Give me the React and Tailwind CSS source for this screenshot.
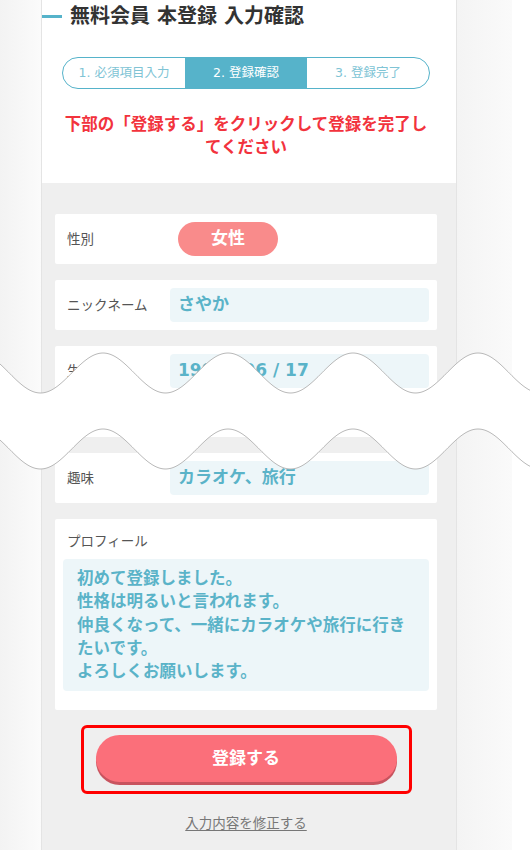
import React from 'react';

const font = { fontFamily: '"DejaVu Sans", "Noto Sans CJK JP", sans-serif' };

const Wave = () => {
  // wave outline of the "cut" in the screenshot, computed from a cosine
  const pts = [];
  for (let x = -4; x <= 534; x += 2) {
    const d = 20 * Math.cos((2 * Math.PI * (x - 103)) / 125);
    pts.push([x, d]);
  }
  const top = pts.map(([x, d]) => `${x},${(373 - d).toFixed(2)}`);
  const bottom = pts.map(([x, d]) => `${x},${(449 - d).toFixed(2)}`);
  const fill = `M${top.join(' L')} L${[...bottom].reverse().join(' L')} Z`;
  return (
    <svg className="absolute left-0 top-0 pointer-events-none" width="530" height="850" viewBox="0 0 530 850">
      <path d={fill} fill="#ffffff" />
      <path d={`M${top.join(' L')}`} fill="none" stroke="#b9b9b9" strokeWidth="1" />
      <path d={`M${bottom.join(' L')}`} fill="none" stroke="#b9b9b9" strokeWidth="1" />
    </svg>
  );
};

const Row = ({ label, children }) => (
  <div className="flex items-center h-[50px] bg-white rounded-[2px] pl-3 pr-2">
    <div className="w-[103px] shrink-0 text-[13.5px] text-[#555]">{label}</div>
    <div className="flex-1">{children}</div>
  </div>
);

const Value = ({ children }) => (
  <div className="h-[34px] flex items-center bg-[#edf6f9] rounded-[4px] pl-2 text-[17px] font-bold text-[#5ab3c8]">
    {children}
  </div>
);

export default function App() {
  return (
    <div className="relative w-[530px] h-[850px] overflow-hidden bg-white flex" style={font}>
      <div className="w-[41px] shrink-0 bg-linear-to-r from-[#f3f3f3] to-[#fbfbfb]" />

      <div className="w-[416px] shrink-0 border-x border-[#e4e4e4] bg-[#efefef] flex flex-col">
        {/* header */}
        <div className="bg-white pb-[24px]">
          <div className="flex items-center h-[34px] -mt-[1px]">
            <div className="w-[20px] h-[3px] bg-[#56b3ca]" />
            <h1 className="ml-[8px] text-[20px] font-bold text-[#333]">無料会員 本登録 入力確認</h1>
          </div>

          <div className="pl-[13px] pr-[19px]">
            <div className="mx-[7px] mt-[24px] h-[32px] flex border border-[#56b3ca] rounded-full overflow-hidden text-[12.5px]">
              <div className="flex-1 flex items-center justify-center text-[#80c4d5]">1. 必須項目入力</div>
              <div className="flex-1 flex items-center justify-center bg-[#56b3ca] text-white">2. 登録確認</div>
              <div className="flex-1 flex items-center justify-center text-[#80c4d5]">3. 登録完了</div>
            </div>

            <p className="mt-[24px] text-center text-[16.5px] leading-[23px] font-bold text-[#f2333d]">
              下部の「登録する」をクリックして登録を完了し<br />てください
            </p>
          </div>
        </div>

        {/* confirmation rows */}
        <div className="pl-[13px] pr-[19px] pt-[31px] flex flex-col gap-4">
          <Row label="性別">
            <div className="ml-2 w-[100px] h-[34px] rounded-full bg-[#f98b8b] flex items-center justify-center text-white text-[17px] font-bold">
              女性
            </div>
          </Row>
          <Row label="ニックネーム">
            <Value>さやか</Value>
          </Row>
          <Row label="生年月日">
            <Value>1990 / 06 / 17</Value>
          </Row>
          <div className="h-[25px] bg-white rounded-[2px]" />
          <Row label="趣味">
            <Value>カラオケ、旅行</Value>
          </Row>

          <div className="bg-white rounded-[2px] px-2 pt-[13px] pb-[19px]">
            <div className="pl-1 text-[13.5px] leading-[18px] text-[#555]">プロフィール</div>
            <div className="mt-[9px] bg-[#edf6f9] rounded-[4px] pl-[14px] py-[8px] text-[16.5px] leading-[23.3px] font-bold text-[#5ab3c8] whitespace-nowrap">
              <div>初めて登録しました。</div>
              <div>性格は明るいと言われます。</div>
              <div>仲良くなって、一緒にカラオケや旅行に行き</div>
              <div>たいです。</div>
              <div>よろしくお願いします。</div>
            </div>
          </div>
        </div>

        <div className="pl-[13px] pr-[19px] mt-[15px] flex flex-col items-center">
          <div className="w-[331px] border-[3px] border-[#ff0000] rounded-[6px] px-[12px] pt-[7px] pb-[9px]">
            <button className="w-full h-[47px] rounded-full bg-[#fb6f7a] shadow-[0_3px_0_#c8545f] text-white text-[17px] font-bold">
              登録する
            </button>
          </div>
          <a href="#" className="mt-[19px] text-[13.5px] text-[#777] underline underline-offset-2">
            入力内容を修正する
          </a>
        </div>
      </div>

      <div className="w-[55px] shrink-0 bg-linear-to-r from-[#f4f4f4] to-[#fafafa]" />

      <Wave />
    </div>
  );
}
